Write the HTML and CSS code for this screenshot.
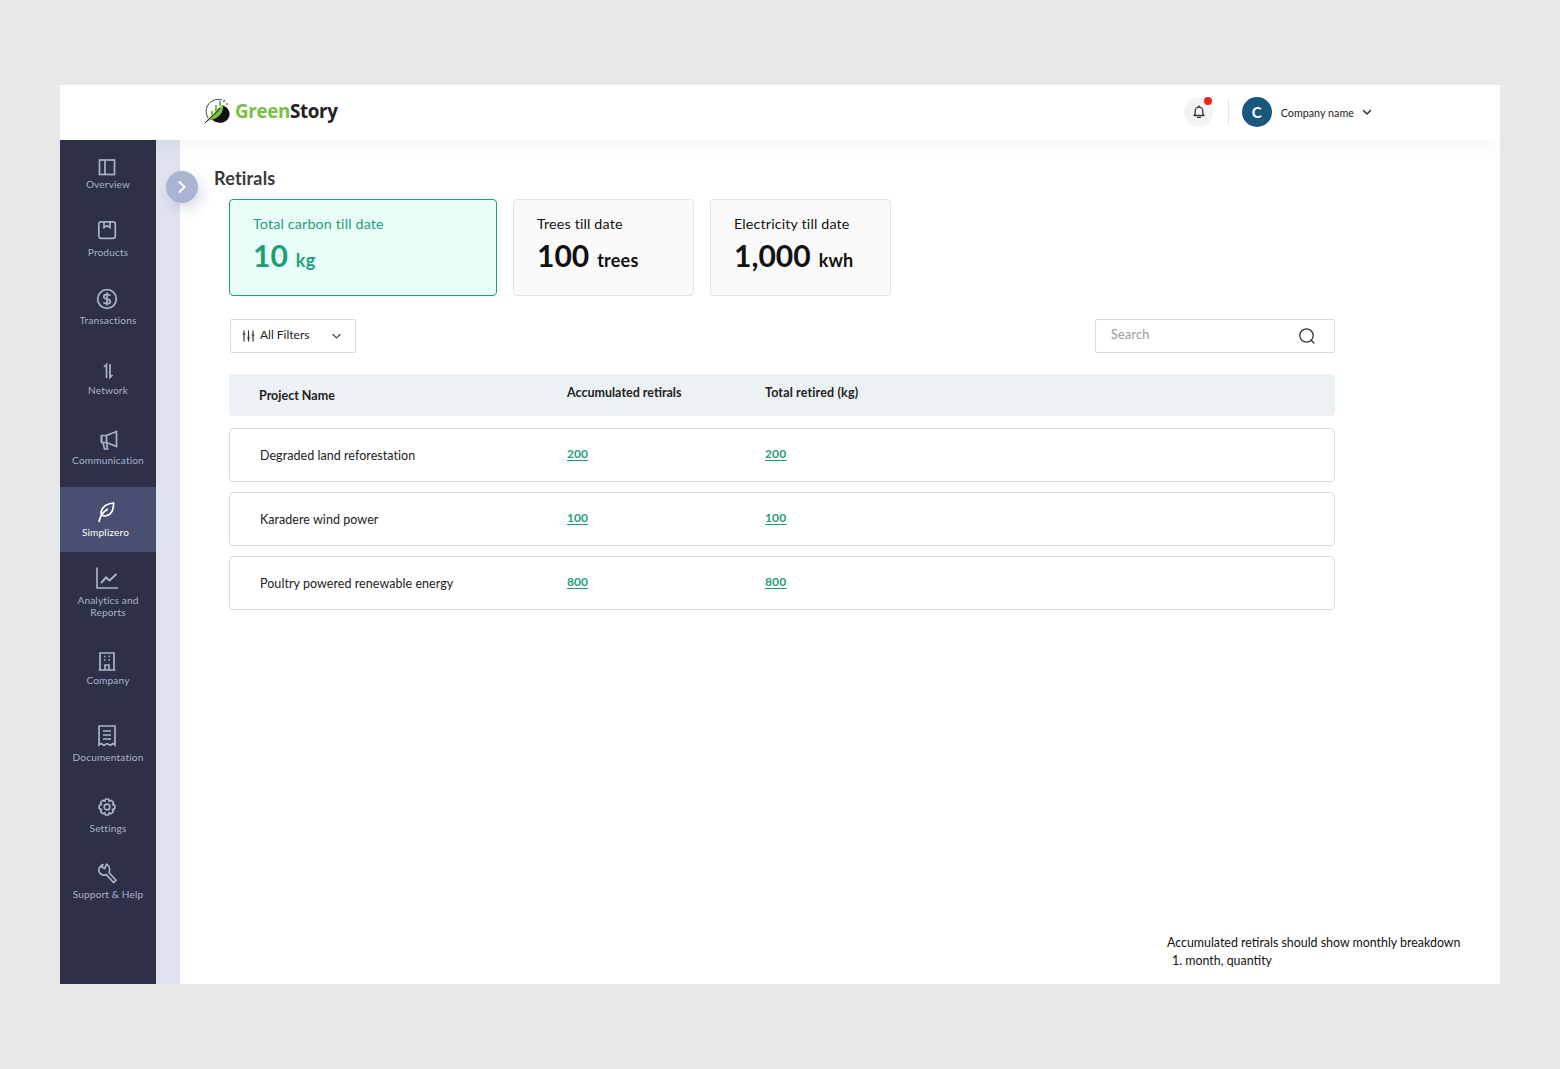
FILE: index.html
```html
<!DOCTYPE html>
<html lang="en">
<head>
<meta charset="utf-8">
<title>Retirals</title>
<link rel="stylesheet" href="styles.css">
</head>
<body>
<div class="frame">
  <header class="topbar">
    <div class="logo">
      <svg class="logo-mark" width="28" height="28" viewBox="0 0 28 28">
        <path d="M5 21C1.500 15 3 7 10 3.500c3-1.400 6-1.500 9-.5" fill="none" stroke="#444" stroke-width="1"/>
        <path d="M19 8c6 2 9 7 7 12-2 5-8 7-13 5-2-.7-4-2-5-3 6 0 10-6 11-14z" fill="#111"/>
        <path d="M3 25C6 20 11 18 13 13l7-5c1 6-3 12-9 14-3 1-5 2-8 3z" fill="#7ac143"/>
        <path d="M2 26 C7 20 12 18 17 11" fill="none" stroke="#111" stroke-width="1"/>
        <path d="M9 14v4M13 8v6M17 4v5" stroke="#7ac143" stroke-width="2"/>
        <circle cx="21" cy="4" r="1.300" fill="#39a9e0"/>
        <circle cx="24" cy="7" r="1.300" fill="#f39a1f"/>
      </svg>
      <span class="logo-text"><span class="logo-green">Green</span>Story</span>
    </div>
    <div class="account">
      <div class="bell">
        <svg width="14" height="14" viewBox="0 0 14 14" fill="none" stroke="#333" stroke-width="1.300" stroke-linejoin="round" stroke-linecap="round">
          <path d="M2 10.500h10l-1.200-2V6A3.800 3.800 0 0 0 3.200 6v2.500z"/>
          <path d="M5.500 12.300h3M7 1v1"/>
        </svg>
        <span class="bell-dot"></span>
      </div>
      <span class="divider"></span>
      <div class="avatar">C</div>
      <span class="company">Company name</span>
      <svg class="caret" width="10" height="7" viewBox="0 0 10 7" fill="none" stroke="#333" stroke-width="1.500" stroke-linecap="round" stroke-linejoin="round"><path d="M1.500 1.500 5 5l3.500-3.500"/></svg>
    </div>
  </header>

  <div class="body-row">
    <nav class="sidebar">
      <a class="nav-item">
        <svg class="nav-icon" viewBox="0 0 24 28"><rect x="3.500" y="9" width="15" height="14.500"/><path d="M9 9v14.500"/></svg>
        <span class="nav-label">Overview</span>
      </a>
      <a class="nav-item">
        <svg class="nav-icon" viewBox="0 0 24 28"><rect x="2.800" y="2.800" width="16.500" height="16.500" rx="2"/><path d="M8 3v5.500l3-1.800 3 1.800V3"/></svg>
        <span class="nav-label">Products</span>
      </a>
      <a class="nav-item">
        <svg class="nav-icon" viewBox="0 0 24 28"><circle cx="11" cy="12" r="9.300"/><path d="M14.300 8.800c-.6-1-1.800-1.500-3.300-1.500-1.800 0-3.200.9-3.200 2.400 0 3.300 6.600 1.500 6.600 4.800 0 1.500-1.500 2.300-3.400 2.300-1.600 0-3-.6-3.600-1.700M11 5.500v13"/></svg>
        <span class="nav-label">Transactions</span>
      </a>
      <a class="nav-item">
        <svg class="nav-icon" viewBox="0 0 24 28"><path d="M10.500 21V7.500L8 10M14 7v13.500l2.500-2.500"/></svg>
        <span class="nav-label">Network</span>
      </a>
      <a class="nav-item">
        <svg class="nav-icon" viewBox="0 0 24 28"><path d="M5.500 8.500h5L20.500 4.500v15l-10-4h-5z"/><path d="M5.500 8.500v7M7 15.500l1.500 6.500h3l-1-6.300M10.500 8.500v7"/></svg>
        <span class="nav-label">Communication</span>
      </a>
      <a class="nav-item is-active">
        <svg class="nav-icon" viewBox="0 0 24 28"><path d="M7 15c0-6.500 4.500-10 12.500-11 .3 7.500-2.800 13-9 13-1.500 0-2.700-.7-3.500-2z"/><path d="M5 23c1-6 4.500-10.500 9-13"/></svg>
        <span class="nav-label">Simplizero</span>
      </a>
      <a class="nav-item nav-item-wrap">
        <svg class="nav-icon" viewBox="0 0 24 28"><path d="M1 0.500V21h21"/><path d="M5 16l5-5.500 3.500 3L20.500 7" stroke-width="2"/></svg>
        <span class="nav-label">Analytics and<br>Reports</span>
      </a>
      <a class="nav-item">
        <svg class="nav-icon" viewBox="0 0 24 28"><path d="M4 6h14v17H4zM2.500 23h17"/><path d="M9 23v-5h4v5M8 9.500h1.500M12.500 9.500H14M8 13h1.500M12.500 13H14"/></svg>
        <span class="nav-label">Company</span>
      </a>
      <a class="nav-item">
        <svg class="nav-icon" viewBox="0 0 24 28"><path d="M3 2h16v19l-2-1.400-2.700 1.600-3.300-1.600-3 1.600-3-1.600L3 21z"/><path d="M7 7h8M7 11h8M7 15h8"/></svg>
        <span class="nav-label">Documentation</span>
      </a>
      <a class="nav-item">
        <svg class="nav-icon" viewBox="0 0 24 28"><circle cx="11" cy="12" r="2.800"/><path d="M9.500 4h3l.7 2.200 2.100-.9 2.200 2.200-1 2 2.300.9v3.200l-2.300.9 1 2-2.200 2.200-2.100-.9-.7 2.200h-3l-.7-2.200-2.100.9-2.200-2.200 1-2-2.300-.9V10.400l2.300-.9-1-2 2.200-2.200 2.100.9z" stroke-linejoin="round"/></svg>
        <span class="nav-label">Settings</span>
      </a>
      <a class="nav-item">
        <svg class="nav-icon" viewBox="0 0 24 28"><path d="M7 3.500C3.500 5 1.800 8.500 3.200 11.200 4.600 13.800 7.800 14.800 10.300 13.600L17.500 21.500 20 19.300 13 11.500C14.500 8.500 13.500 5 10.500 3.200L8.800 7.500 5.800 6z" stroke-linejoin="round"/></svg>
        <span class="nav-label">Support &amp; Help</span>
      </a>
    </nav>
    <div class="strip">
      <button class="toggle" type="button" aria-label="Expand">
        <svg width="10" height="14" viewBox="0 0 10 14" fill="none" stroke="#fff" stroke-width="2" stroke-linecap="round" stroke-linejoin="round"><path d="M2.500 2 7.500 7l-5 5"/></svg>
      </button>
    </div>
    <main class="main">
      <h1 class="title">Retirals</h1>
      <div class="content">
        <section class="cards">
          <div class="card card-active">
            <div class="card-label">Total carbon till date</div>
            <div class="card-value">10<span class="unit">kg</span></div>
          </div>
          <div class="card">
            <div class="card-label">Trees till date</div>
            <div class="card-value">100<span class="unit">trees</span></div>
          </div>
          <div class="card">
            <div class="card-label">Electricity till date</div>
            <div class="card-value">1,000<span class="unit">kwh</span></div>
          </div>
        </section>

        <section class="toolbar">
          <button class="filter" type="button">
            <svg width="13" height="12" viewBox="0 0 13 12" fill="none" stroke="#333" stroke-width="1.200"><path d="M2 0.500v11M6.500 0.500v11M11 0.500v11M0.500 4h3M5 8h3M9.500 5h3"/></svg>
            <span class="filter-text">All Filters</span>
            <svg class="filter-caret" width="9" height="6" viewBox="0 0 9 6" fill="none" stroke="#333" stroke-width="1.100" stroke-linecap="round"><path d="M1 1.500 4.500 4.800 8 1.500"/></svg>
          </button>
          <div class="search">
            <span class="search-text">Search</span>
            <svg width="18" height="18" viewBox="0 0 18 18" fill="none" stroke="#333" stroke-width="1.300" stroke-linecap="round"><circle cx="8.500" cy="8.500" r="6.700"/><path d="M13.500 13.500 16 16"/></svg>
          </div>
        </section>

        <div class="thead">
          <span class="col-name th-name">Project Name</span>
          <span class="col-acc">Accumulated retirals</span>
          <span class="col-total">Total retired (kg)</span>
        </div>
        <div class="rows">
          <div class="row">
            <span class="col-name">Degraded land reforestation</span>
            <a class="col-acc num">200</a>
            <a class="col-total num">200</a>
          </div>
          <div class="row">
            <span class="col-name">Karadere wind power</span>
            <a class="col-acc num">100</a>
            <a class="col-total num">100</a>
          </div>
          <div class="row">
            <span class="col-name">Poultry powered renewable energy</span>
            <a class="col-acc num">800</a>
            <a class="col-total num">800</a>
          </div>
        </div>
      </div>
      <div class="note">
        <div>Accumulated retirals should show monthly breakdown</div>
        <div class="note-item">1. month, quantity</div>
      </div>
    </main>
  </div>
</div>
</body>
</html>
```
FILE: styles.css
```css
* { box-sizing: border-box; }
html, body { margin: 0; padding: 0; }
body {
  background: #e8e8e8;
  font-family: "Lato", "Open Sans", sans-serif;
  color: #222;
  height: 1069px;
  overflow: hidden;
  padding: 85px 60px 0;
}
.frame {
  width: 1440px;
  height: 899px;
  display: flex;
  flex-direction: column;
  background: #fff;
  overflow: hidden;
}
.topbar {
  height: 55px;
  flex: none;
  background: #fff;
  display: flex;
  align-items: center;
  padding: 0 128px 0 143px;
  justify-content: space-between;
  box-shadow: 0 10px 20px -6px rgba(60, 70, 100, 0.07);
  position: relative;
  z-index: 2;
}
.logo { display: flex; align-items: center; gap: 4px; margin-top: -4px; }
.logo-text { font-family: "Open Sans", sans-serif; font-weight: 700; font-size: 18.800px; letter-spacing: -0.350px; color: #222; }
.logo-green { color: #7ac143; }
.account { display: flex; align-items: center; margin-top: -1px; }
.bell {
  width: 30px; height: 30px; border-radius: 50%;
  background: #f4f4f4;
  display: flex; align-items: center; justify-content: center;
  position: relative;
}
.bell-dot {
  position: absolute; top: 0; right: 2px;
  width: 8px; height: 8px; border-radius: 50%;
  background: #e8261c;
}
.divider { width: 1px; height: 28px; background: #e6e6e6; margin: 0 13px 0 14px; }
.avatar {
  width: 30px; height: 30px; border-radius: 50%;
  background: #19577f; color: #fff;
  display: flex; align-items: center; justify-content: center;
  font-size: 15px; font-weight: 700;
}
.company { font-size: 10.700px; margin: 1px 0 0 9px; color: #222; letter-spacing: 0.050px; }
.caret { margin-left: 8px; margin-top: 1px; }

.body-row { flex: 1; display: flex; min-height: 0; }
.sidebar {
  width: 96px; flex: none;
  background: #2d3047;
  display: grid;
  grid-template-rows: 68px 68px 70px 70px 71px 65px 84px 77px 71px 66px 1fr;
}
.nav-item {
  display: flex; flex-direction: column; align-items: center;
  padding-top: 11px;
  color: #a9b2ce;
  font-size: 10.100px;
  line-height: 12px;
  text-align: center;
  letter-spacing: 0.150px;
}
.nav-label { margin-top: -1px; }
.nav-icon {
  width: 24px; height: 28px; flex: none;
  fill: none; stroke: currentColor; stroke-width: 1.700;
  overflow: visible;
}
.nav-item-wrap { padding-top: 15px; }
.is-active {
  background: #4a4e72; color: #fff;
  padding-top: 12px; padding-right: 5px;
}
.strip {
  width: 24px; flex: none;
  background: #dfe3ef;
  position: relative;
}
.toggle {
  position: absolute; top: 31px; left: 10px;
  width: 32px; height: 32px; border-radius: 50%;
  border: 0; padding: 0;
  background: #aab4d2;
  box-shadow: 4px 6px 14px rgba(90, 100, 140, 0.22);
  display: flex; align-items: center; justify-content: center;
}
.main {
  flex: 1; min-width: 0;
  display: flex; flex-direction: column;
  padding: 26px 0 14px 34px;
}
.title { margin: 0; font-size: 18px; line-height: 24px; font-weight: 700; color: #3a3a3a; letter-spacing: 0.200px; }
.content { margin: 9px 0 0 15px; width: 1106px; }
.cards { display: flex; gap: 16px; }
.card {
  width: 181px; height: 97px;
  background: #fafafa;
  border: 1px solid #e2e2e2;
  border-radius: 4px;
  padding: 14px 23px;
  color: #111;
}
.card-active {
  width: 268px;
  background: #e9fdf8;
  border-color: #1f9e7a;
  color: #1f9e7a;
}
.card-label { font-size: 14.300px; line-height: 20px; letter-spacing: 0.150px; }
.card-value { font-size: 30px; line-height: 40px; font-weight: 700; margin-top: 1px; }
.unit { font-size: 18px; margin-left: 8px; letter-spacing: 0.200px; }

.toolbar { display: flex; justify-content: space-between; margin-top: 23px; padding-left: 1px; }
.filter {
  width: 126px; height: 34px;
  background: #fff;
  border: 1px solid #d9d9d9;
  border-radius: 2px;
  display: flex; align-items: center;
  padding: 0 14px 0 11px;
  font: inherit; font-size: 12px; color: #222;
}
.filter-text { margin-left: 5px; margin-top: -3px; }
.filter-caret { margin-left: auto; }
.search {
  width: 240px; height: 34px;
  border: 1px solid #d9d9d9;
  border-radius: 2px;
  display: flex; align-items: center; justify-content: space-between;
  padding: 0 18px 0 15px;
  font-size: 12.500px; color: #999;
}
.search-text { margin-top: -4px; letter-spacing: 0.300px; }

.thead {
  margin-top: 21px;
  height: 42px;
  background: #ecf1f4;
  border-radius: 4px;
  display: grid;
  grid-template-columns: 338px 198px 1fr;
  padding-bottom: 6px;
  align-items: center;
  font-size: 12.500px; font-weight: 700; color: #222;
}
.th-name { padding-left: 30px; padding-top: 6px; }
.col-total { letter-spacing: 0.150px; }
.rows { display: flex; flex-direction: column; gap: 10px; margin-top: 12px; }
.row {
  height: 54px;
  border: 1px solid #dcdcdc;
  border-radius: 4px;
  display: grid;
  grid-template-columns: 337px 198px 1fr;
  align-items: center;
  font-size: 12.500px;
  color: #222;
  letter-spacing: 0.050px;
}
.row .col-name { padding-left: 30px; }
.num {
  color: #1f9e7a; font-weight: 700; font-size: 12px;
  text-decoration: underline; text-underline-offset: 2px;
  margin-top: -4px;
}
.note {
  margin-top: auto;
  align-self: flex-end;
  width: 333px;
  font-size: 12.400px;
  line-height: 18px;
  color: #111;
}
.note-item { padding-left: 5px; }
```
